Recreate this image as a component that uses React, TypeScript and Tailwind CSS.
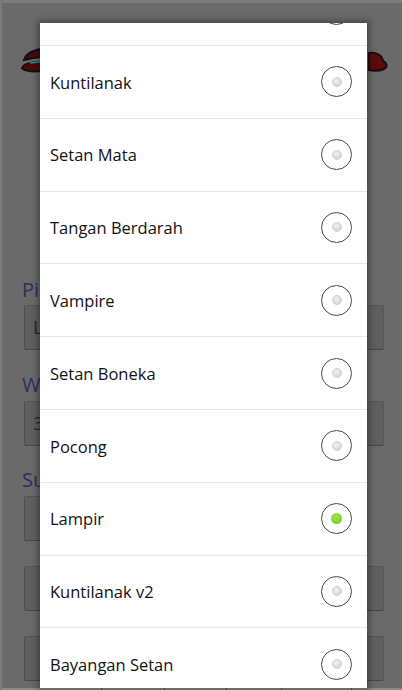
import React from "react";

const ITEMS = [
  "",
  "Kuntilanak",
  "Setan Mata",
  "Tangan Berdarah",
  "Vampire",
  "Setan Boneka",
  "Pocong",
  "Lampir",
  "Kuntilanak v2",
  "Bayangan Setan",
];

const SELECTED = "Lampir";

function Radio({ checked }: { checked: boolean }) {
  return (
    <div className="w-[31px] h-[31px] rounded-full border-[1.5px] border-[#474747] flex items-center justify-center bg-white">
      {checked ? (
        <div className="w-[11px] h-[11px] rounded-full bg-[radial-gradient(circle_at_40%_35%,#9be84a,#6cc41e)]" />
      ) : (
        <div className="w-[10px] h-[10px] rounded-full border border-[#d0d0d0] bg-[radial-gradient(circle_at_40%_35%,#f2f2f2,#cacaca)]" />
      )}
    </div>
  );
}

function Logo() {
  return (
    <svg className="w-[402px] h-[60px]" viewBox="0 0 402 60">
      {/* left ribbon */}
      <path
        d="M22 38 C24 31 32 28 40 27 L40 35 C33 35 28 37 22 38 Z"
        fill="#500909"
        stroke="#111"
        strokeWidth="2"
      />
      <path
        d="M20 46 C22 41 30 40 40 40 L40 49 C31 50 24 50 20 46 Z"
        fill="#500909"
        stroke="#111"
        strokeWidth="2"
      />
      <path d="M28 41 L38 40" stroke="#2f8a86" strokeWidth="1.5" />
      {/* right blob */}
      <path
        d="M367 31 C374 30 380 33 381 39 C385 41 386 45 382 47 C377 49 371 49 367 48 Z"
        fill="#5e0a0a"
        stroke="#111"
        strokeWidth="2"
      />
    </svg>
  );
}

function Field({ w = "w-[360px]", text }: { w?: string; text?: string }) {
  return (
    <div
      className={`${w} h-[45px] ml-[22px] rounded-[2px] bg-[#5f5f5f] border border-[#555] border-b-[#474747] border-l-[#4e4e4e] flex items-center px-[8px] text-[19px] text-[#2a2a2a] overflow-hidden`}
    >
      <span className="w-[10px] overflow-hidden whitespace-nowrap">{text}</span>
    </div>
  );
}

function Label({ text, mt }: { text: string; mt: string }) {
  return (
    <div className={`${mt} ml-[20px] w-[20px] overflow-hidden whitespace-nowrap text-[20px] leading-[24px] text-[#29315c]`}>
      {text}
    </div>
  );
}

export default function App() {
  return (
    <div className="relative w-[402px] h-[690px] overflow-hidden bg-[#6a6a6a] font-['Open_Sans','Roboto',sans-serif]">
      {/* dimmed page underneath */}
      <div className="flex flex-col h-full border-t-[3px] border-l-[2px] border-[#7b7b7b]">
        <div className="h-[19px]" />
        <Logo />
        <div className="h-[196px]" />
        <Label text="Pilih Hantu" mt="mt-0" />
        <div className="h-[3px]" />
        <Field text="Lampir" />
        <Label text="Waktu" mt="mt-[23px]" />
        <div className="h-[4px]" />
        <Field text="30 detik" />
        <Label text="Suara" mt="mt-[22px]" />
        <div className="h-[4px]" />
        <Field w="w-[200px]" />
        <div className="h-[25px]" />
        <Field />
        <div className="h-[25px]" />
        <Field />
        <div className="mt-auto h-[2px] bg-[#8a8a8a] flex">
          <div className="w-[100px] border-r border-[#555]" />
          <div className="w-[63px] border-r border-[#555]" />
          <div className="w-[62px] border-r border-[#555]" />
          <div className="w-[55px] border-r border-[#555]" />
          <div className="w-[70px] border-r border-[#555]" />
        </div>
      </div>

      {/* single choice dialog */}
      <div className="absolute left-[40px] top-[23px] w-[327px] bottom-[2px] bg-white overflow-hidden shadow-[0_0_6px_3px_rgba(0,0,0,0.3)]">
        <div className="flex flex-col mt-[-49.8px]">
          {ITEMS.map((name, i) => (
            <div
              key={i}
              className="h-[72.8px] shrink-0 flex items-center justify-between pl-[10px] pr-[15px] border-b border-[#e6e6e6]"
            >
              <span className="pt-[2px] text-[16.5px] text-[#121212]">{name}</span>
              <Radio checked={name === SELECTED} />
            </div>
          ))}
        </div>
      </div>
    </div>
  );
}
